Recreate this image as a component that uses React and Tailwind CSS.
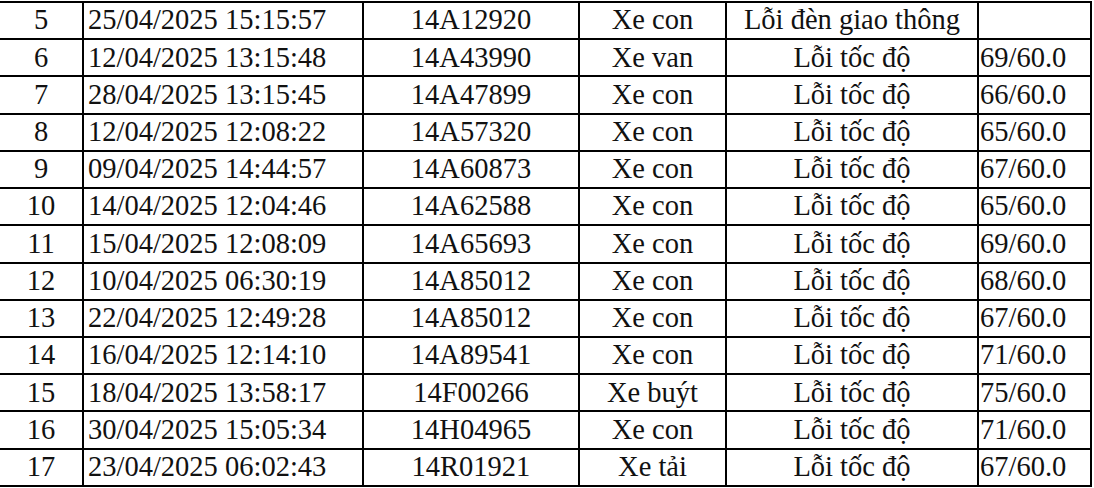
const ROWS = [
  ["5", "25/04/2025 15:15:57", "14A12920", "Xe con", "Lỗi đèn giao thông", ""],
  ["6", "12/04/2025 13:15:48", "14A43990", "Xe van", "Lỗi tốc độ", "69/60.0"],
  ["7", "28/04/2025 13:15:45", "14A47899", "Xe con", "Lỗi tốc độ", "66/60.0"],
  ["8", "12/04/2025 12:08:22", "14A57320", "Xe con", "Lỗi tốc độ", "65/60.0"],
  ["9", "09/04/2025 14:44:57", "14A60873", "Xe con", "Lỗi tốc độ", "67/60.0"],
  ["10", "14/04/2025 12:04:46", "14A62588", "Xe con", "Lỗi tốc độ", "65/60.0"],
  ["11", "15/04/2025 12:08:09", "14A65693", "Xe con", "Lỗi tốc độ", "69/60.0"],
  ["12", "10/04/2025 06:30:19", "14A85012", "Xe con", "Lỗi tốc độ", "68/60.0"],
  ["13", "22/04/2025 12:49:28", "14A85012", "Xe con", "Lỗi tốc độ", "67/60.0"],
  ["14", "16/04/2025 12:14:10", "14A89541", "Xe con", "Lỗi tốc độ", "71/60.0"],
  ["15", "18/04/2025 13:58:17", "14F00266", "Xe buýt", "Lỗi tốc độ", "75/60.0"],
  ["16", "30/04/2025 15:05:34", "14H04965", "Xe con", "Lỗi tốc độ", "71/60.0"],
  ["17", "23/04/2025 06:02:43", "14R01921", "Xe tải", "Lỗi tốc độ", "67/60.0"],
];

// widths include the 2px right border of each cell
const COLS = [
  "w-[84px] justify-center",
  "w-[280px] justify-start pl-[4px]",
  "w-[216px] justify-center",
  "w-[147px] justify-center",
  "w-[252px] justify-center",
  "w-[113px] justify-start pl-[1px]",
];

export default function App() {
  return (
    <div
      className="w-[1094px] h-[488px] overflow-hidden bg-white text-[#111] text-[28.5px] leading-none"
      style={{ fontFamily: '"Liberation Serif", "Times New Roman", serif' }}
    >
      <div className="mt-[1px] w-[1092px] border-t-2 border-black">
        {ROWS.map((row) => (
          <div key={row[0]} className="flex h-[37.23px] border-b-2 border-black">
            {row.map((cell, i) => (
              <div
                key={i}
                className={`${COLS[i]} flex shrink-0 items-center border-r-2 border-black whitespace-nowrap`}
              >
                {cell}
              </div>
            ))}
          </div>
        ))}
      </div>
    </div>
  );
}
